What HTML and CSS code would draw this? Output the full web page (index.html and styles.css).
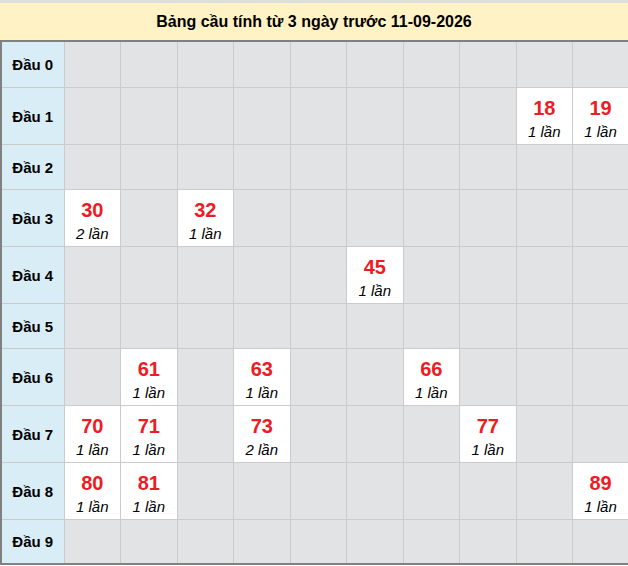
FILE: index.html
```html
<!DOCTYPE html>
<html lang="vi">
<head>
<meta charset="utf-8">
<title>Bảng cầu</title>
<link rel="stylesheet" href="styles.css">
</head>
<body>
<div class="wrap">
  <div class="title">Bảng cầu tính từ 3 ngày trước 11-09-2026</div>
  <table class="grid">
    <colgroup>
      <col class="c-head">
      <col><col><col><col><col><col><col><col><col><col>
    </colgroup>
    <tbody>
      <tr class="empty first"><th>Đầu 0</th><td></td><td></td><td></td><td></td><td></td><td></td><td></td><td></td><td></td><td></td></tr>
      <tr class="full"><th>Đầu 1</th><td></td><td></td><td></td><td></td><td></td><td></td><td></td><td></td>
        <td class="hit"><div class="num">18</div><div class="cnt">1 lần</div></td>
        <td class="hit"><div class="num">19</div><div class="cnt">1 lần</div></td></tr>
      <tr class="empty"><th>Đầu 2</th><td></td><td></td><td></td><td></td><td></td><td></td><td></td><td></td><td></td><td></td></tr>
      <tr class="full"><th>Đầu 3</th>
        <td class="hit"><div class="num">30</div><div class="cnt">2 lần</div></td>
        <td></td>
        <td class="hit"><div class="num">32</div><div class="cnt">1 lần</div></td>
        <td></td><td></td><td></td><td></td><td></td><td></td><td></td></tr>
      <tr class="full"><th>Đầu 4</th><td></td><td></td><td></td><td></td><td></td>
        <td class="hit"><div class="num">45</div><div class="cnt">1 lần</div></td>
        <td></td><td></td><td></td><td></td></tr>
      <tr class="empty"><th>Đầu 5</th><td></td><td></td><td></td><td></td><td></td><td></td><td></td><td></td><td></td><td></td></tr>
      <tr class="full"><th>Đầu 6</th><td></td>
        <td class="hit"><div class="num">61</div><div class="cnt">1 lần</div></td>
        <td></td>
        <td class="hit"><div class="num">63</div><div class="cnt">1 lần</div></td>
        <td></td><td></td>
        <td class="hit"><div class="num">66</div><div class="cnt">1 lần</div></td>
        <td></td><td></td><td></td></tr>
      <tr class="full"><th>Đầu 7</th>
        <td class="hit"><div class="num">70</div><div class="cnt">1 lần</div></td>
        <td class="hit"><div class="num">71</div><div class="cnt">1 lần</div></td>
        <td></td>
        <td class="hit"><div class="num">73</div><div class="cnt">2 lần</div></td>
        <td></td><td></td><td></td>
        <td class="hit"><div class="num">77</div><div class="cnt">1 lần</div></td>
        <td></td><td></td></tr>
      <tr class="full"><th>Đầu 8</th>
        <td class="hit"><div class="num">80</div><div class="cnt">1 lần</div></td>
        <td class="hit"><div class="num">81</div><div class="cnt">1 lần</div></td>
        <td></td><td></td><td></td><td></td><td></td><td></td><td></td>
        <td class="hit"><div class="num">89</div><div class="cnt">1 lần</div></td></tr>
      <tr class="empty last"><th>Đầu 9</th><td></td><td></td><td></td><td></td><td></td><td></td><td></td><td></td><td></td><td></td></tr>
    </tbody>
  </table>
</div>
</body>
</html>
```

FILE: styles.css
```css
html, body {
  margin: 0;
  padding: 0;
  background: #ffffff;
  overflow: hidden;
}

body {
  font-family: "Liberation Sans", Arial, sans-serif;
  color: #000;
}

.wrap {
  width: 628px;
  overflow: hidden;
}

.title {
  width: 628px;
  height: 37px;
  border-top: 3px solid #dedede;
  background: #fff2c4;
  font-size: 16px;
  font-weight: bold;
  line-height: 37px;
  text-align: center;
}

.grid {
  width: 630px;
  table-layout: fixed;
  border-collapse: collapse;
  border: 2px solid #808080;
}

.c-head {
  width: 63px;
}

.grid th,
.grid td {
  border: 1px solid #cbcbcb;
  padding: 0;
  text-align: center;
}

.grid th {
  background: #d9edf7;
  font-size: 15px;
  font-weight: bold;
  vertical-align: middle;
}

.grid td {
  background: #e2e3e5;
  vertical-align: top;
}

.grid td.hit {
  background: #ffffff;
  padding-top: 8px;
}

.empty th,
.empty td {
  height: 44px;
}

.empty.first th,
.empty.first td {
  height: 45px;
}

.full th,
.full td {
  height: 48px;
}

.empty.last th,
.empty.last td {
  height: 43px;
}

.num {
  font-size: 20px;
  font-weight: bold;
  color: #ed1c24;
  line-height: 24px;
}

.cnt {
  font-size: 15px;
  font-style: italic;
  line-height: 24px;
}
```
